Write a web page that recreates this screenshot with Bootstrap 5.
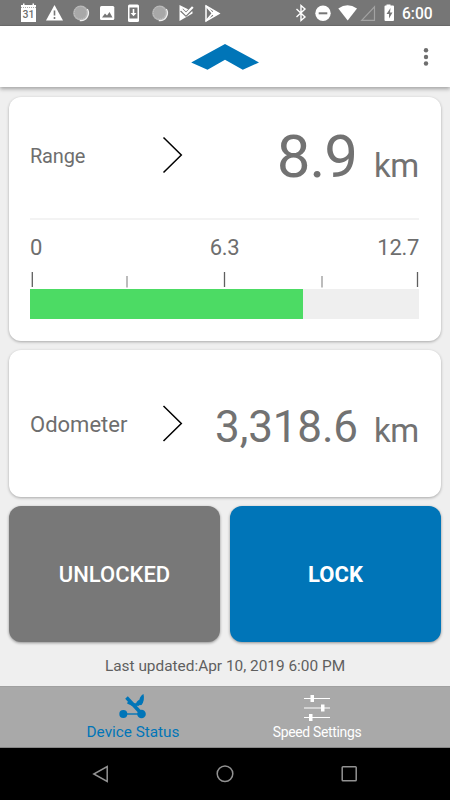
<!DOCTYPE html>
<html lang="en">
<head>
<meta charset="utf-8">
<meta name="viewport" content="width=device-width, initial-scale=1">
<title>Device Status</title>
<link href="https://cdn.jsdelivr.net/npm/bootstrap@5.3.0/dist/css/bootstrap.min.css" rel="stylesheet">
<style>
body{font-family:Roboto,"Liberation Sans",sans-serif;background:#efefef;color:#6e6e6e;line-height:1}
svg{display:block;flex:none}
.screen{width:450px;height:800px}
.status-bar{height:26px;background:#767676;border-bottom:1px solid #6d6d6d}
.app-bar{height:61px;box-shadow:0 2px 4px rgba(0,0,0,.32)}
.content{height:599px;padding:9.500px 9px 0}
.panel{border:0;border-radius:12px;box-shadow:0 1px 3px rgba(0,0,0,.3)}
.range-panel{height:244.500px;margin-bottom:9px;padding:0 22px 0 21px}
.odo-panel{height:147px;margin-bottom:9px;padding:2px 22px 0 21px}
.range-row{height:123px;border-bottom:2px solid #f3f3f3}
.range-row .label-box{padding-bottom:3px}
.range-row svg{margin-bottom:5px}
.label-box{width:132px}
.fs-range{font-size:20px;letter-spacing:-.2px}
.fs-odo{font-size:22px}
.val-range{font-size:60px;letter-spacing:-1px;color:#727272}
.val-odo{font-size:44px;letter-spacing:-.15px;color:#727272}
.unit{font-size:33px;margin-left:17px;letter-spacing:-.3px;color:#727272}
.val-odo + .unit{margin-left:16px}
.axis{font-size:22px;padding-top:17px;height:49px;letter-spacing:-.3px}
.gauge{height:29.500px;margin-top:-.5px;border-radius:0;background:#efefef}
.gauge .progress-bar{background:#4cdb64}
.btn-pair{gap:10px}
.state-btn{height:136px;border:0;border-radius:12px;font-size:22px;color:#fff;box-shadow:0 1px 3px rgba(0,0,0,.4)}
.state-off{background:#787878;font-weight:500}
.state-on{background:#0075b8;font-weight:700}
.updated{font-size:15.400px;margin-top:17px;color:#5f5f5f}
.tab-strip{height:62px;background:#a9a9a9;border-bottom:1px solid #858585;border-top:1px solid #a0a0a0}
.tab-item{width:184px;color:#fff;padding-top:6px}
.tab-item.active{color:#0075b8}
.tab-one{font-size:15.300px}
.tab-two{font-size:13.900px;letter-spacing:-.3px}
.sys-nav{height:52px}
</style>
<script src="https://cdn.jsdelivr.net/npm/bootstrap@5.3.0/dist/js/bootstrap.bundle.min.js"></script>
</head>
<body>
<div class="screen d-flex flex-column overflow-hidden">
  <div class="status-bar">
    <svg width="450" height="25" fill="#fff">
      <path d="M21 5h2V3.500h1.500V5h8V3.500H34V5h2v17H21z"/>
      <path d="M21 7.500h15" stroke="#aaa" stroke-dasharray="1 1"/>
      <text x="28.400" y="18" font-size="10.500" font-weight="500" fill="#707070" text-anchor="middle">31</text>
      <path d="M54.500 5 63 20.500H46z"/><path d="M54.500 10.500v5m0 1.500v2" stroke="#767676" stroke-width="1.600"/>
      <g id="disc"><circle cx="80.800" cy="13" r="7.600" fill="#b4b4b4"/><circle cx="80.500" cy="12.700" r="6.300" fill="#a8a8a8" stroke="#c6c6c6" stroke-width=".8" stroke-dasharray="1 1"/><path d="M87.300 9a7.600 7.600 0 0 1-7.500 11.500" fill="none" stroke="#efefef" stroke-width="1.300"/></g>
      <use href="#disc" x="79"/>
      <rect x="100" y="6" width="14.300" height="14" rx="1.500"/><path d="M102 17.500l3-4 2 2 2.500-3.500 3 5.500z" fill="#767676"/>
      <rect x="128" y="4.500" width="11" height="17.500" rx="1.500"/><path d="M129.500 7.500h8v11h-8z" fill="#767676"/><path d="M132.700 9h1.600v4h2.200l-3 3.200-3-3.200h2.200z"/>
      <path d="M179.500 5l13 6.500 0 2-13 7.500z"/><path d="M181.500 10l4.500 4.300L193.500 7" fill="none" stroke="#767676" stroke-width="4"/><path d="M181.500 9.500l4.500 4.500L192.800 7" fill="none" stroke="#fff" stroke-width="2.200"/>
      <path d="M206 6l13 7.500L206 21z" fill="none" stroke="#fff" stroke-width="1.500"/><path d="M206 6l8.500 9.500M206 21l8.500-10" stroke="#fff" stroke-width="1.700"/><path d="M214 10.500l5.500 3-5.500 3-2.500-3z"/>
      <path d="M296.500 9l8.500 8-4 3.500v-15l4 3.500-8.500 8" fill="none" stroke="#fff" stroke-width="1.400"/>
      <circle cx="323" cy="13.300" r="7.700"/><path d="M318.700 13.300h8.600" stroke="#767676" stroke-width="2"/>
      <path d="M338.300 8.500Q347.500 2 357 8.500L347.700 20.500z"/>
      <path d="M374.500 6.800v13.500h-12.800z" fill="none" stroke="#a2a2a2" stroke-width="1.200"/>
      <path d="M386.500 5.500V4.500h4v1h2.500q1 0 1 1V20q0 1-1 1h-7.500q-1 0-1-1V6.500q0-1 1-1z"/><path d="M390.500 8l-4 6h2.500v4.500l3.500-6H390z" fill="#767676"/>
      <text x="402" y="18.800" font-size="15.600" font-weight="500">6:00</text>
    </svg>
  </div>

  <header class="app-bar bg-white d-flex align-items-center position-relative">
    <svg width="450" height="61"><path d="M191.200 36.500 225 18l34 18.500-16.200 7.300L225 33.800l-17.500 10z" fill="#0075b8"/><g fill="#6e6e6e"><circle cx="426" cy="24.200" r="2.200"/><circle cx="426" cy="31" r="2.200"/><circle cx="426" cy="37.500" r="2.200"/></g></svg>
  </header>

  <main class="content">
    <section class="card panel range-panel">
      <div class="range-row d-flex align-items-center">
        <div class="label-box fs-range">Range</div>
        <svg width="22" height="38"><path d="M1.500 1.500 19.300 19 1.500 36.500" fill="none" stroke="#000" stroke-width="1.500"/></svg>
        <div class="ms-auto d-flex align-items-baseline"><span class="val-range">8.9</span><span class="unit">km</span></div>
      </div>
      <div class="axis row g-0"><span class="col">0</span><span class="col text-center">6.3</span><span class="col text-end">12.7</span></div>
      <svg width="389" height="21" stroke="#5f5f5f" stroke-width="1.300"><path d="M2.300 3v15M194.500 3v15M387.500 3v15"/><path d="M97 7v11.500M292 7v11.500" stroke="#999"/></svg>
      <div class="progress gauge"><div class="progress-bar" style="width:70.2%"></div></div>
    </section>

    <section class="card panel odo-panel justify-content-center">
      <div class="d-flex align-items-center">
        <div class="label-box fs-odo">Odometer</div>
        <svg width="22" height="38" class="mb-1"><path d="M1.500 2 19.300 19.500 1.500 37" fill="none" stroke="#000" stroke-width="1.500"/></svg>
        <div class="ms-auto d-flex align-items-baseline pt-1"><span class="val-odo">3,318.6</span><span class="unit">km</span></div>
      </div>
    </section>

    <div class="btn-pair d-flex">
      <button class="btn state-btn state-off flex-fill w-50">UNLOCKED</button>
      <button class="btn state-btn state-on flex-fill w-50">LOCK</button>
    </div>
    <div class="updated text-center">Last updated:Apr 10, 2019 6:00 PM</div>
  </main>

  <nav class="tab-strip d-flex justify-content-center">
    <div class="tab-item active tab-one d-flex flex-column align-items-center">
      <svg width="30" height="32" fill="none" stroke="currentColor"><path d="M5.300 21h18" stroke-width="1.400"/><circle cx="5.300" cy="21" r="4" fill="currentColor" stroke="none"/><circle cx="23.500" cy="21" r="4.300" fill="currentColor" stroke="none"/><path d="M8.500 4.500 22 19" stroke-width="3.600"/><path d="M9.500 9.500 14 11.500h7" stroke-width="2.300"/><path d="M25.500 1q1.500 6.500-2 11l-5.500.500q-.5-4 3.500-6 .5-3.500 4-5.500z" fill="currentColor" stroke="none"/></svg>
      <span>Device Status</span>
    </div>
    <div class="tab-item tab-two d-flex flex-column align-items-center">
      <svg width="28" height="33" fill="currentColor" stroke="currentColor"><path d="M1 5.500h26M1 15h26M1 24.500h26" stroke-width="1.200"/><path d="M7.500 2h3.500v7H7.500zM18 11.500h3.500v7H18zM6 21h3.500v7H6z" stroke="none"/></svg>
      <span>Speed Settings</span>
    </div>
  </nav>

  <div class="sys-nav bg-black d-flex">
    <svg width="450" height="52" fill="none" stroke="#929292" stroke-width="1.500"><path d="M107.200 18.500v15L93.800 26z"/><circle cx="225" cy="25.700" r="7.800"/><rect x="342.200" y="18.700" width="14" height="14" rx=".8"/></svg>
  </div>
</div>
</body>
</html>
